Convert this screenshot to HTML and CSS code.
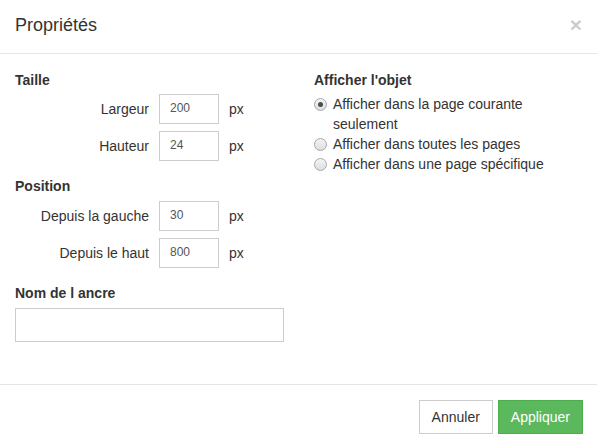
FILE: index.html
```html
<!DOCTYPE html>
<html lang="fr">
<head>
<meta charset="utf-8">
<title>Propriétés</title>
<link rel="stylesheet" href="styles.css">
</head>
<body>
<div class="modal">
  <div class="modal-header">
    <h4 class="modal-title">Propriétés</h4>
    <button class="close" type="button">×</button>
  </div>
  <div class="modal-body">
    <div class="col">
      <div class="group-label">Taille</div>
      <div class="field-row">
        <label class="field-label">Largeur</label>
        <input class="input-sm" type="text" value="200">
        <span class="unit">px</span>
      </div>
      <div class="field-row">
        <label class="field-label">Hauteur</label>
        <input class="input-sm" type="text" value="24">
        <span class="unit">px</span>
      </div>
      <div class="group-label group-gap">Position</div>
      <div class="field-row">
        <label class="field-label">Depuis la gauche</label>
        <input class="input-sm" type="text" value="30">
        <span class="unit">px</span>
      </div>
      <div class="field-row">
        <label class="field-label">Depuis le haut</label>
        <input class="input-sm" type="text" value="800">
        <span class="unit">px</span>
      </div>
      <div class="group-label group-gap">Nom de l ancre</div>
      <input class="input-wide" type="text">
    </div>
    <div class="col">
      <div class="group-label">Afficher l'objet</div>
      <label class="radio"><input type="radio" name="show" checked><span>Afficher dans la page courante seulement</span></label>
      <label class="radio"><input type="radio" name="show"><span>Afficher dans toutes les pages</span></label>
      <label class="radio"><input type="radio" name="show"><span>Afficher dans une page spécifique</span></label>
    </div>
  </div>
  <div class="modal-footer">
    <button class="btn btn-default" type="button">Annuler</button>
    <button class="btn btn-success" type="button">Appliquer</button>
  </div>
</div>
</body>
</html>
```

FILE: styles.css
```css
* { box-sizing: border-box; }
html, body {
  margin: 0;
  padding: 0;
  background: #fff;
}
body {
  font-family: "Liberation Sans", Arial, sans-serif;
  font-size: 14px;
  line-height: 20px;
  color: #333;
}
.modal {
  width: 597px;
}
.modal-header {
  display: flex;
  align-items: center;
  justify-content: space-between;
  height: 54px;
  padding: 0 15px;
  border-bottom: 1px solid #e5e5e5;
}
.modal-title {
  margin: 0;
  font-size: 18px;
  font-weight: normal;
  line-height: 23px;
  color: #333;
  padding-bottom: 3px;
}
.close {
  border: 0;
  background: transparent;
  padding: 0;
  margin: 0 0 4px 0;
  font-family: "Liberation Sans", Arial, sans-serif;
  font-size: 21px;
  font-weight: bold;
  line-height: 1;
  color: #000;
  opacity: 0.2;
}
.modal-body {
  display: grid;
  grid-template-columns: 268px 268px;
  column-gap: 31px;
  padding: 16px 15px 42px 15px;
  border-bottom: 1px solid #e5e5e5;
}
.group-label {
  font-weight: bold;
  margin-bottom: 4px;
}
.group-gap {
  margin-top: 15px;
  margin-bottom: 5px;
}
.field-row {
  display: grid;
  grid-template-columns: 134px 60px auto;
  column-gap: 10px;
  align-items: center;
  margin-bottom: 7px;
}
.field-row:last-of-type { margin-bottom: 0; }
.field-label {
  text-align: right;
}
.input-sm {
  height: 30px;
  width: 60px;
  padding: 4px 10px 6px;
  border: 1px solid #ccc;
  border-radius: 0;
  font-family: "Liberation Sans", Arial, sans-serif;
  font-size: 12px;
  color: #555;
  outline: none;
}
.unit {
  color: #333;
}
.input-wide {
  display: block;
  width: 269px;
  height: 34px;
  border: 1px solid #ccc;
  border-radius: 0;
  padding: 6px 12px;
  font-family: "Liberation Sans", Arial, sans-serif;
  font-size: 14px;
  outline: none;
}
.radio {
  display: flex;
  align-items: flex-start;
  line-height: 20px;
}
.radio span {
  margin-left: 6px;
  max-width: 230px;
}
.radio input {
  appearance: none;
  -webkit-appearance: none;
  flex: none;
  width: 13px;
  height: 13px;
  margin: 4px 0 0 0;
  border: 1px solid #a8a8a8;
  border-radius: 50%;
  background: linear-gradient(#f4f4f4, #dedede);
  display: grid;
  place-items: center;
}
.radio input:checked::after {
  content: "";
  width: 5px;
  height: 5px;
  border-radius: 50%;
  background: #4d4d4d;
}
.modal-footer {
  display: flex;
  justify-content: flex-end;
  gap: 5px;
  padding: 15px 14px 15px 15px;
}
.btn {
  font-family: "Liberation Sans", Arial, sans-serif;
  font-size: 14px;
  line-height: 20px;
  padding: 6px 12px;
  height: 34px;
  border: 1px solid transparent;
  border-radius: 0;
}
.btn-default {
  background: #fff;
  border-color: #ccc;
  color: #333;
}
.btn-success {
  background: #5cb85c;
  border-color: #4cae4c;
  color: #fff;
}
```
